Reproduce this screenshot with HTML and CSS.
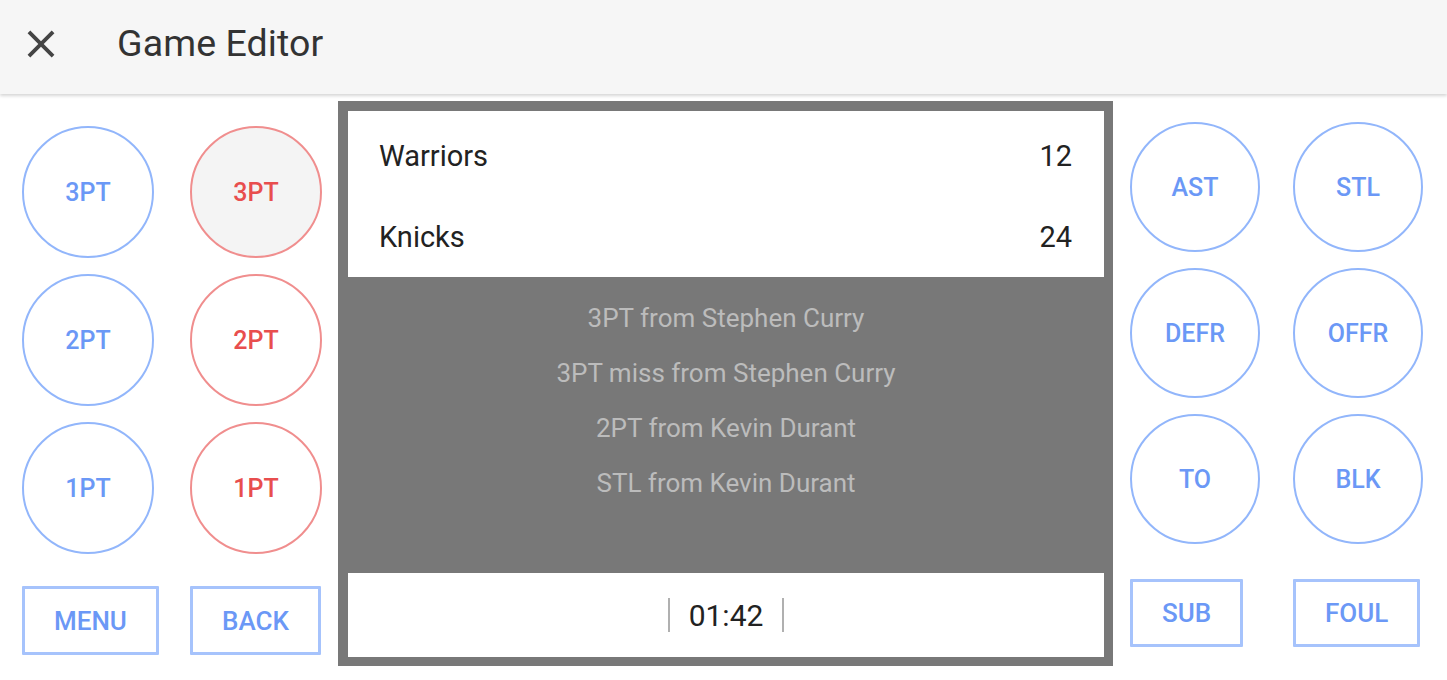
FILE: index.html
```html
<!DOCTYPE html>
<html lang="en">
<head>
<meta charset="utf-8">
<title>Game Editor</title>
<link rel="stylesheet" href="styles.css">
</head>
<body>
<header class="toolbar">
  <svg class="close-icon" viewBox="0 0 24 24" aria-hidden="true"><path d="M19 6.41L17.59 5 12 10.59 6.41 5 5 6.41 10.59 12 5 17.59 6.41 19 12 13.41 17.59 19 19 17.59 13.41 12z"/></svg>
  <h1 class="title">Game Editor</h1>
</header>
<main class="editor">
  <section class="pad pad-left">
    <div class="circles">
      <button class="circle blue">3PT</button>
      <button class="circle red pressed">3PT</button>
      <button class="circle blue">2PT</button>
      <button class="circle red">2PT</button>
      <button class="circle blue">1PT</button>
      <button class="circle red">1PT</button>
    </div>
    <div class="actions">
      <button class="rect">MENU</button>
      <button class="rect">BACK</button>
    </div>
  </section>

  <section class="board">
    <div class="scores">
      <div class="score-row"><span>Warriors</span><span>12</span></div>
      <div class="score-row"><span>Knicks</span><span>24</span></div>
    </div>
    <ul class="log">
      <li>3PT from Stephen Curry</li>
      <li>3PT miss from Stephen Curry</li>
      <li>2PT from Kevin Durant</li>
      <li>STL from Kevin Durant</li>
    </ul>
    <div class="timer">
      <span class="bar"></span>
      <span class="time">01:42</span>
      <span class="bar"></span>
    </div>
  </section>

  <section class="pad pad-right">
    <div class="circles">
      <button class="circle blue">AST</button>
      <button class="circle blue">STL</button>
      <button class="circle blue">DEFR</button>
      <button class="circle blue">OFFR</button>
      <button class="circle blue">TO</button>
      <button class="circle blue">BLK</button>
    </div>
    <div class="actions">
      <button class="rect">SUB</button>
      <button class="rect">FOUL</button>
    </div>
  </section>
</main>
</body>
</html>
```

FILE: styles.css
```css
* { box-sizing: border-box; }

html, body {
  margin: 0;
  padding: 0;
  background: #ffffff;
  font-family: Roboto, "Liberation Sans", sans-serif;
  width: 1447px;
  height: 680px;
  overflow: hidden;
}

.toolbar {
  height: 94px;
  background: #f6f6f6;
  display: flex;
  align-items: center;
  padding-left: 18px;
  box-shadow: 0 2px 3px rgba(0, 0, 0, 0.16);
  position: relative;
  z-index: 1;
}

.close-icon {
  width: 46px;
  height: 46px;
  fill: #444444;
  margin-top: -6px;
}

.title {
  margin: -8px 0 0 53px;
  font-size: 37.5px;
  font-weight: 400;
  color: #333333;
  letter-spacing: 0.1px;
}

.editor {
  display: flex;
  height: 586px;
}

.pad {
  display: flex;
  flex-direction: column;
}

.pad-left {
  width: 338px;
  padding: 32px 0 0 22px;
}

.pad-right {
  width: 334px;
  padding: 28px 0 0 17px;
}

.circles {
  display: grid;
  grid-template-columns: 132px 132px;
  column-gap: 36px;
  row-gap: 16px;
}

.pad-right .circles {
  grid-template-columns: 130px 130px;
  column-gap: 33px;
  row-gap: 16px;
}

.circle {
  width: 132px;
  height: 132px;
  border-radius: 50%;
  background: #ffffff;
  font-family: Roboto, "Liberation Sans", sans-serif;
  font-size: 25px;
  font-weight: 500;
  padding: 0;
  display: flex;
  align-items: center;
  justify-content: center;
}

.pad-right .circle {
  width: 130px;
  height: 130px;
}

.circle.blue {
  border: 2px solid #92b6fb;
  color: #6b98f6;
}

.circle.red {
  border: 2px solid #f08e8e;
  color: #e84e4e;
}

.circle.pressed {
  background: #f4f4f4;
}

.actions {
  display: grid;
  grid-template-columns: 132px 132px;
  column-gap: 36px;
  margin-top: 32px;
}

.pad-right .actions {
  grid-template-columns: 130px 130px;
  column-gap: 33px;
  margin-top: 35px;
}

.rect {
  justify-self: start;
  height: 69px;
  padding: 0 29px;
  background: #ffffff;
  border: 3px solid #a6c3fc;
  border-radius: 1px;
  color: #6b98f6;
  font-family: Roboto, "Liberation Sans", sans-serif;
  font-size: 26px;
  font-weight: 500;
  white-space: nowrap;
}

.pad-right .rect {
  height: 68px;
  padding: 0 29px;
}

.board {
  width: 775px;
  height: 565px;
  margin-top: 7px;
  background: #787878;
  padding: 10px 9px 9px 10px;
  display: flex;
  flex-direction: column;
}

.scores {
  background: #ffffff;
  height: 166px;
  padding: 4px 32px 0 31px;
  display: flex;
  flex-direction: column;
}

.score-row {
  flex: 1;
  display: flex;
  justify-content: space-between;
  align-items: center;
  font-size: 29px;
  color: #222222;
}

.log {
  flex: 1;
  list-style: none;
  margin: 0;
  padding: 14px 0 0;
  text-align: center;
  font-size: 26px;
  line-height: 55px;
  color: #bcbcbc;
}

.timer {
  background: #ffffff;
  height: 84px;
  display: flex;
  align-items: center;
  justify-content: center;
  gap: 19px;
}

.bar {
  width: 2px;
  height: 34px;
  background: #b0b0b0;
}

.time {
  font-size: 30px;
  color: #222222;
}
```
